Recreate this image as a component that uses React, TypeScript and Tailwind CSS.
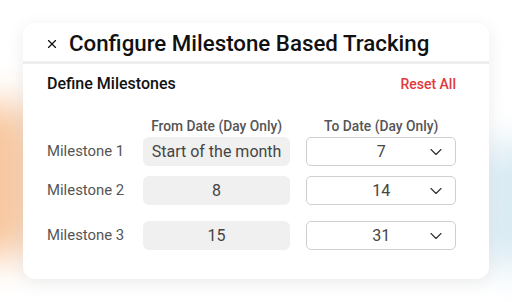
import { ChevronDown, X } from "lucide-react";

const rows = [
  { label: "Milestone 1", from: "Start of the month", to: "7", gap: "mt-[2px]" },
  { label: "Milestone 2", from: "8", to: "14", gap: "mt-[10px]" },
  { label: "Milestone 3", from: "15", to: "31", gap: "mt-[16px]" },
];

export default function App() {
  return (
    <div className="relative w-[512px] h-[302px] overflow-hidden bg-white font-['Roboto',sans-serif]">
      <div className="absolute -left-[30px] top-[100px] w-[62px] h-[160px] rounded-full bg-[#f7c49a] blur-[18px]" />
      <div className="absolute -right-[30px] top-[140px] w-[60px] h-[130px] rounded-full bg-[#d6e9f3] blur-[18px]" />
      <div className="relative mx-[23px] mt-[23px] h-[256px] rounded-[12px] bg-white shadow-[0_4px_18px_rgba(0,0,0,0.08)]">
        <div className="flex items-center h-[41px] pt-[3px] pl-[22px] border-b-[3px] border-[#eeeef1]">
          <X className="w-[14px] h-[14px] text-[#111]" strokeWidth={2} />
          <h1 className="ml-[10px] text-[22.3px] leading-none font-medium text-[#111]">Configure Milestone Based Tracking</h1>
        </div>
        <div className="flex items-center justify-between h-[20px] pl-[24px] pr-[33px] mt-[10px]">
          <span className="text-[16px] font-medium text-[#111]">Define Milestones</span>
          <span className="text-[14px] font-medium text-[#e0393e]">Reset All</span>
        </div>
        <div className="pl-[24px] pr-[33px] mt-[23px]">
          <div className="flex items-center h-[18px] text-[13.8px] font-medium text-[#555]">
            <span className="w-[96px]" />
            <span className="w-[148px] text-center">From Date (Day Only)</span>
            <span className="ml-[16px] w-[150px] text-center">To Date (Day Only)</span>
          </div>
          {rows.map((r) => (
            <div key={r.label} className={`flex items-center ${r.gap}`}>
              <span className="w-[96px] text-[14.9px] text-[#555]">{r.label}</span>
              <div className="w-[148px] h-[29px] rounded-[6px] bg-[#f0f0f0] flex items-center justify-center text-[16px] text-[#444]">
                {r.from}
              </div>
              <div className="relative ml-[16px] w-[150px] h-[29px] rounded-[5px] border border-[#cfcfcf] bg-white flex items-center justify-center text-[16px] text-[#444]">
                {r.to}
                <ChevronDown className="absolute right-[9px] w-[20px] h-[20px] text-[#333]" strokeWidth={1.4} />
              </div>
            </div>
          ))}
        </div>
      </div>
    </div>
  );
}
